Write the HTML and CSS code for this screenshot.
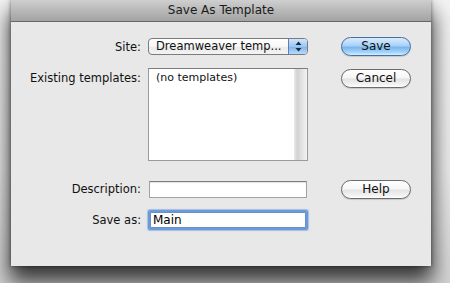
FILE: index.html
```html
<!DOCTYPE html>
<html>
<head>
<meta charset="utf-8">
<link rel="stylesheet" href="styles.css">
</head>
<body>
<div class="window">
  <div class="titlebar">Save As Template</div>
  <div class="content">
    <div class="row row-site">
      <div class="label">Site:</div>
      <div class="field">
        <div class="popup">
          <span class="popup-text">Dreamweaver temp...</span>
          <span class="popup-arrows">
            <svg width="7" height="11" viewBox="0 0 7 11"><path d="M3.5 0.5 L6.5 4 L0.5 4 Z" fill="#1b2a44"/><path d="M3.5 10.5 L6.5 7 L0.5 7 Z" fill="#1b2a44"/></svg>
          </span>
        </div>
      </div>
      <div class="btn btn-default">Save</div>
    </div>
    <div class="row row-list">
      <div class="label label-top">Existing templates:</div>
      <div class="field">
        <div class="listbox">
          <div class="list-items">(no templates)</div>
          <div class="scrolltrack"></div>
        </div>
      </div>
      <div class="btn">Cancel</div>
    </div>
    <div class="row row-desc">
      <div class="label">Description:</div>
      <div class="field">
        <div class="textfield desc"></div>
      </div>
      <div class="btn">Help</div>
    </div>
    <div class="row row-saveas">
      <div class="label">Save as:</div>
      <div class="field">
        <div class="textfield focused">Main</div>
      </div>
    </div>
  </div>
</div>
</body>
</html>
```
FILE: styles.css
```css
html, body {
  margin: 0;
  padding: 0;
}
body {
  width: 450px;
  height: 283px;
  overflow: hidden;
  background: linear-gradient(to bottom, #f4f4f4 0%, #ececec 60%, #d4d4d4 100%);
  font-family: "DejaVu Sans", "Liberation Sans", sans-serif;
  font-size: 11.5px;
  color: #111;
}
.window {
  margin-left: 11px;
  width: 420px;
  height: 266px;
  background: #e8e8e8;
  box-shadow: 0 14px 20px 2px rgba(0,0,0,0.75), 0 0 4px rgba(0,0,0,0.5);
  display: flex;
  flex-direction: column;
}
.titlebar {
  height: 21px;
  border-bottom: 1px solid #666;
  background: linear-gradient(to bottom, #cfcfcf 0%, #b8b8b8 50%, #a3a3a3 100%);
  text-align: center;
  line-height: 21px;
  font-size: 12px;
  color: #1a1a1a;
}
.content {
  display: flex;
  flex-direction: column;
}
.row {
  display: flex;
  align-items: center;
}
.label {
  width: 130px;
  padding-right: 7px;
  text-align: right;
  color: #111;
}
.field {
  width: 160px;
}
.row-site {
  margin-top: 15px;
  height: 19px;
}
.row-list {
  margin-top: 12px;
  height: 94px;
  align-items: flex-start;
}
.label-top {
  padding-top: 3px;
}
.row-desc {
  margin-top: 17px;
  height: 20px;
}
.row-saveas {
  margin-top: 10px;
  height: 22px;
}

/* popup */
.popup {
  height: 17px;
  box-sizing: border-box;
  border: 1px solid #7b7b7b;
  border-radius: 4px;
  background: linear-gradient(to bottom, #ffffff 0%, #f6f6f6 50%, #e9e9e9 51%, #f4f4f4 100%);
  display: flex;
  overflow: hidden;
  margin-top: -1px;
}
.popup-text {
  flex: 1;
  padding-left: 7px;
  line-height: 15px;
  color: #111;
  white-space: nowrap;
}
.popup-arrows {
  width: 18px;
  border-left: 1px solid #5a7fb6;
  background: linear-gradient(to bottom, #cfe5fb 0%, #9cc7f1 50%, #7fb2ea 51%, #b7dcfb 100%);
  display: flex;
  align-items: center;
  justify-content: center;
}

/* buttons */
.btn {
  margin-left: 33px;
  width: 70px;
  height: 19px;
  box-sizing: border-box;
  border: 1px solid #6b6b6b;
  border-radius: 10px;
  background: linear-gradient(to bottom, #ffffff 0%, #f6f6f6 45%, #e4e4e4 55%, #f2f2f2 85%, #ffffff 100%);
  text-align: center;
  line-height: 17px;
  font-size: 12px;
  color: #111;
  box-shadow: 0 1px 1px rgba(0,0,0,0.15);
}
.btn-default {
  border-color: #4a6e9e;
  background: linear-gradient(to bottom, #d8ecfd 0%, #a9d1f7 45%, #79b6ee 55%, #a6d6fb 85%, #d5f0ff 100%);
}
.row-list .btn {
  margin-top: 1px;
}

/* listbox */
.listbox {
  height: 93px;
  box-sizing: border-box;
  border: 1px solid #9a9a9a;
  border-top-color: #7c7c7c;
  background: #fff;
  display: flex;
}
.list-items {
  flex: 1;
  padding: 2px 0 0 7px;
  font-size: 11px;
  color: #111;
}
.scrolltrack {
  width: 13px;
  background: linear-gradient(to right, #ebebeb 0%, #d2d2d2 25%, #e2e2e2 60%, #f3f3f3 100%);
}

/* text fields */
.textfield {
  box-sizing: border-box;
  background: #fff;
  border: 1px solid #a3a3a3;
  border-top-color: #7d7d7d;
  box-shadow: inset 0 1px 1px rgba(0,0,0,0.12);
}
.textfield.desc {
  margin-left: 1px;
  width: 158px;
  height: 17px;
}
.textfield.focused {
  margin-left: 2px;
  width: 156px;
  height: 16px;
  border-color: #6e8fc2;
  box-shadow: 0 0 0 2px #6a9ad9, 0 0 1px 3px rgba(100,150,220,0.5);
  border-radius: 1px;
  padding-left: 2px;
  line-height: 14px;
  font-size: 12px;
  color: #000;
}
```
